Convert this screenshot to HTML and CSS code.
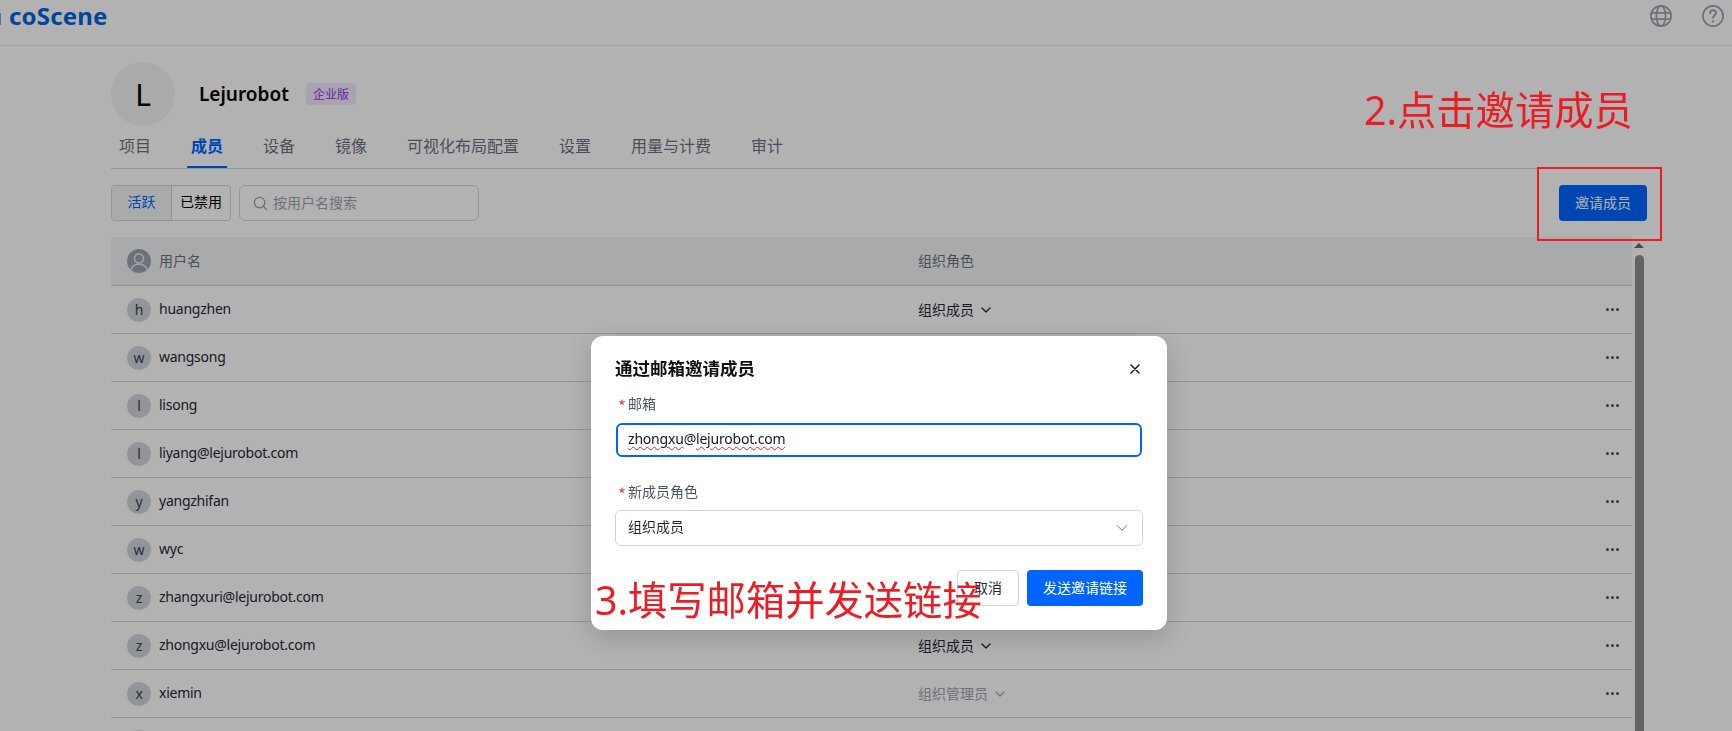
FILE: index.html
```html
<!DOCTYPE html>
<html lang="zh-CN">
<head>
<meta charset="utf-8">
<title>coScene 成员</title>
<link rel="stylesheet" href="styles.css">
</head>
<body>
<div class="page">
  <header class="topbar">
    <div class="logo"><span class="logo-mark"></span><span class="logo-text">coScene</span></div>
    <div class="top-icons">
      <svg class="top-icon" viewBox="1 1 22 22" fill="none" stroke="currentColor" stroke-width="1.7"><circle cx="12" cy="12" r="10.100"/><ellipse cx="12" cy="12" rx="4.600" ry="10.100"/><path d="M2.600 8.800h18.800M2.600 15.200h18.800"/></svg>
      <svg class="top-icon" viewBox="1 1 22 22" fill="none" stroke="currentColor" stroke-width="1.7" stroke-linecap="round"><circle cx="12" cy="12" r="10.100"/><path d="M9 9.200c0-1.700 1.300-2.900 3-2.900s3 1.200 3 2.800c0 2.500-3 2.500-3 4.600" stroke-width="1.900"/><path d="M12 17.300v.2" stroke-width="2.200"/></svg>
    </div>
  </header>
  <main class="content">
    <section class="org">
      <div class="org-avatar latin">L</div>
      <h1 class="org-name latin">Lejurobot</h1>
      <span class="badge">企业版</span>
    </section>
    <nav class="tabs">
      <a class="tab">项目</a>
      <a class="tab tab-active">成员</a>
      <a class="tab">设备</a>
      <a class="tab">镜像</a>
      <a class="tab">可视化布局配置</a>
      <a class="tab">设置</a>
      <a class="tab">用量与计费</a>
      <a class="tab">审计</a>
    </nav>
    <div class="toolbar">
      <div class="segment">
        <span class="seg seg-active">活跃</span>
        <span class="seg">已禁用</span>
      </div>
      <div class="search">
        <svg class="search-icon" viewBox="0 0 16 16" fill="none" stroke="currentColor" stroke-width="1.4" stroke-linecap="round"><circle cx="7" cy="7" r="5.600"/><path d="M11.200 11.200l3.600 3.600"/></svg>
        <span class="lift">按用户名搜索</span>
      </div>
      <button class="invite">邀请成员</button>
    </div>
    <div class="table-wrap">
      <div class="table">
        <div class="row row-head">
          <div class="cell-user">
            <svg class="user-icon" viewBox="0 0 24 24"><circle cx="12" cy="12" r="12" fill="#9ca3af"/><circle cx="12" cy="9.400" r="4.500" fill="none" stroke="#e5e7eb" stroke-width="1.600"/><path d="M3.800 20.600c1.400-3.600 4.600-5.400 8.200-5.400s6.800 1.800 8.200 5.400" fill="none" stroke="#e5e7eb" stroke-width="1.600"/></svg>
            <span class="lift">用户名</span>
          </div>
          <div class="cell-role"><span class="lift">组织角色</span></div>
        </div>
        <div class="row"><div class="cell-user"><span class="ava latin">h</span><span class="latin lift">huangzhen</span></div><div class="cell-role"><span class="lift">组织成员</span><svg class="chev" viewBox="0 0 12 12" fill="none" stroke="currentColor" stroke-width="1.300" stroke-linecap="round" stroke-linejoin="round"><path d="M2 4l4 4 4-4"/></svg></div><div class="more"><i></i><i></i><i></i></div></div>
        <div class="row"><div class="cell-user"><span class="ava latin">w</span><span class="latin lift">wangsong</span></div><div class="cell-role"><span class="lift">组织成员</span><svg class="chev" viewBox="0 0 12 12" fill="none" stroke="currentColor" stroke-width="1.300" stroke-linecap="round" stroke-linejoin="round"><path d="M2 4l4 4 4-4"/></svg></div><div class="more"><i></i><i></i><i></i></div></div>
        <div class="row"><div class="cell-user"><span class="ava latin">l</span><span class="latin lift">lisong</span></div><div class="cell-role"><span class="lift">组织成员</span><svg class="chev" viewBox="0 0 12 12" fill="none" stroke="currentColor" stroke-width="1.300" stroke-linecap="round" stroke-linejoin="round"><path d="M2 4l4 4 4-4"/></svg></div><div class="more"><i></i><i></i><i></i></div></div>
        <div class="row"><div class="cell-user"><span class="ava latin">l</span><span class="latin lift">liyang@lejurobot.com</span></div><div class="cell-role"><span class="lift">组织成员</span><svg class="chev" viewBox="0 0 12 12" fill="none" stroke="currentColor" stroke-width="1.300" stroke-linecap="round" stroke-linejoin="round"><path d="M2 4l4 4 4-4"/></svg></div><div class="more"><i></i><i></i><i></i></div></div>
        <div class="row"><div class="cell-user"><span class="ava latin">y</span><span class="latin lift">yangzhifan</span></div><div class="cell-role"><span class="lift">组织成员</span><svg class="chev" viewBox="0 0 12 12" fill="none" stroke="currentColor" stroke-width="1.300" stroke-linecap="round" stroke-linejoin="round"><path d="M2 4l4 4 4-4"/></svg></div><div class="more"><i></i><i></i><i></i></div></div>
        <div class="row"><div class="cell-user"><span class="ava latin">w</span><span class="latin lift">wyc</span></div><div class="cell-role"><span class="lift">组织成员</span><svg class="chev" viewBox="0 0 12 12" fill="none" stroke="currentColor" stroke-width="1.300" stroke-linecap="round" stroke-linejoin="round"><path d="M2 4l4 4 4-4"/></svg></div><div class="more"><i></i><i></i><i></i></div></div>
        <div class="row"><div class="cell-user"><span class="ava latin">z</span><span class="latin lift">zhangxuri@lejurobot.com</span></div><div class="cell-role"><span class="lift">组织成员</span><svg class="chev" viewBox="0 0 12 12" fill="none" stroke="currentColor" stroke-width="1.300" stroke-linecap="round" stroke-linejoin="round"><path d="M2 4l4 4 4-4"/></svg></div><div class="more"><i></i><i></i><i></i></div></div>
        <div class="row"><div class="cell-user"><span class="ava latin">z</span><span class="latin lift">zhongxu@lejurobot.com</span></div><div class="cell-role"><span class="lift">组织成员</span><svg class="chev" viewBox="0 0 12 12" fill="none" stroke="currentColor" stroke-width="1.300" stroke-linecap="round" stroke-linejoin="round"><path d="M2 4l4 4 4-4"/></svg></div><div class="more"><i></i><i></i><i></i></div></div>
        <div class="row"><div class="cell-user"><span class="ava latin">x</span><span class="latin lift">xiemin</span></div><div class="cell-role role-muted"><span class="lift">组织管理员</span><svg class="chev" viewBox="0 0 12 12" fill="none" stroke="currentColor" stroke-width="1.300" stroke-linecap="round" stroke-linejoin="round"><path d="M2 4l4 4 4-4"/></svg></div><div class="more"><i></i><i></i><i></i></div></div>
        <div class="row"><div class="cell-user"><span class="ava"></span></div></div>
      </div>
      <div class="scrollbar"><span class="scroll-up"></span><span class="scroll-thumb"></span></div>
    </div>
  </main>
</div>

<div class="overlay"></div>

<div class="modal">
  <div class="modal-head">
    <h2 class="modal-title">通过邮箱邀请成员</h2>
    <svg class="modal-close" viewBox="0 0 12 12" fill="none" stroke="currentColor" stroke-width="1.400" stroke-linecap="round"><path d="M2 2l8 8M10 2l-8 8"/></svg>
  </div>
  <label class="field-label"><span class="req">*</span>邮箱</label>
  <div class="input latin"><span class="typo">zhongxu</span>@<span class="typo">lejurobot.com</span></div>
  <label class="field-label field-gap"><span class="req">*</span>新成员角色</label>
  <div class="select">
    <span class="lift-more">组织成员</span>
    <svg class="select-chev" viewBox="0 0 12 12" fill="none" stroke="currentColor" stroke-width="1" stroke-linecap="round" stroke-linejoin="round"><path d="M1.500 3.800L6 8.300l4.500-4.500"/></svg>
  </div>
  <div class="modal-actions">
    <button class="btn-cancel">取消</button>
    <button class="btn-send">发送邀请链接</button>
  </div>
</div>

<div class="note note-two">2.点击邀请成员</div>
<div class="red-box"></div>
<div class="note note-three">3.填写邮箱并发送链接</div>
</body>
</html>
```
FILE: styles.css
```css
* { box-sizing: border-box; }
html, body { margin: 0; height: 100%; overflow: hidden; background: #fff; }
body {
  font-family: "Noto Sans CJK SC", sans-serif;
  font-size: 14px;
  color: #1f2937;
}
.latin { font-family: "Noto Sans", "Noto Sans CJK SC", sans-serif; letter-spacing: -0.25px; }
.lift { padding-bottom: 2px; }
.lift-more { padding-bottom: 4px; }
.page { height: 731px; overflow: hidden; display: flex; flex-direction: column; }
.topbar {
  height: 46px;
  flex: none;
  border-bottom: 1px solid #e5e7eb;
  display: flex;
  justify-content: space-between;
  align-items: flex-start;
}
.logo { display: flex; align-items: center; height: 32px; }
.logo-mark { width: 1px; height: 12px; background: #7aa6e6; margin-right: 8px; margin-top: 6px; }
.logo-text {
  font-family: "Noto Sans", sans-serif;
  font-size: 24px;
  font-weight: 700;
  color: #0065dd;
  line-height: 32px;
  letter-spacing: 0.2px;
}
.top-icons { display: flex; gap: 30px; padding: 5px 8px 0 0; }
.top-icon { width: 22px; height: 22px; color: #9ca3af; display: block; }
.content { padding: 16px 85px 0 111px; flex: 1; min-height: 0; display: flex; flex-direction: column; }
.org { display: flex; align-items: center; height: 64px; flex: none; }
.org-avatar {
  width: 64px; height: 64px; border-radius: 50%;
  background: #f3f4f6;
  color: #000;
  font-size: 30px;
  display: flex; align-items: center; justify-content: center;
}
.org-name { margin: 0 17px 0 24px; font-size: 19px; font-weight: 600; color: #000; line-height: 24px; letter-spacing: 0; }
.badge {
  width: 50px; height: 22px; border-radius: 4px;
  background: #f3e8ff; color: #9333ea;
  font-size: 12px; line-height: 22px; text-align: center;
}
.tabs {
  display: flex; gap: 32px; height: 43px; flex: none;
  padding-left: 4px;
  border-bottom: 1px solid #d1d5db;
}
.tab {
  padding: 0 4px; font-size: 16px; line-height: 38px; height: 42px;
  color: #6b7280;
}
.tab-active { color: #0065ff; font-weight: 700; border-bottom: 2px solid #0065ff; }
.toolbar { display: flex; align-items: stretch; height: 36px; margin-top: 16px; flex: none; }
.segment { display: flex; border: 1px solid #d1d5db; border-radius: 4px; width: 120px; overflow: hidden; }
.seg { flex: 1; text-align: center; line-height: 31px; color: #000; }
.seg-active { flex: none; width: 60px; background: #f3f4f6; color: #0065ff; border-right: 1px solid #d1d5db; }
.search {
  width: 240px; margin-left: 8px; border: 1px solid #d1d5db; border-radius: 6px;
  display: flex; align-items: center; gap: 5px; padding-left: 13px; color: #9ca3af;
}
.search-icon { width: 15px; height: 15px; color: #9ca3af; }
.invite {
  margin-left: auto; width: 88px; border: 0; border-radius: 4px; padding: 0 0 2px;
  background: #0065ff; color: #fff; font: inherit;
}
.table-wrap { display: flex; margin-top: 16px; flex: 1; min-height: 0; overflow: hidden; }
.table { width: 1521px; flex: none; }
.row {
  height: 48px; display: flex; align-items: center;
  border-bottom: 1px solid #d1d5db; padding-left: 16px; color: #1f2937;
}
.row-head { height: 49px; background: #f3f4f6; color: #6b7280; }
.cell-user { width: 791px; display: flex; align-items: center; gap: 8px; flex: none; }
.cell-role { display: flex; align-items: center; gap: 6px; flex: 1; }
.role-muted { color: #9ca3af; }
.user-icon { width: 24px; height: 24px; }
.ava {
  width: 24px; height: 24px; border-radius: 50%; background: #d1d5db; color: #374151;
  display: flex; align-items: center; justify-content: center; font-size: 14px; line-height: 1;
}
.chev { width: 12px; height: 12px; }
.more { display: flex; gap: 2px; padding-right: 13px; }
.more i { width: 3px; height: 3px; border-radius: 50%; background: #4b5563; }
.scrollbar { width: 14px; display: flex; flex-direction: column; align-items: center; flex: none; padding-top: 6px; }
.scroll-up { width: 0; height: 0; border-left: 5px solid transparent; border-right: 5px solid transparent; border-bottom: 5px solid #6b6b6b; }
.scroll-thumb { width: 9px; flex: 1; margin-top: 7px; background: #8f8f8f; border-radius: 5px 5px 0 0; }
.overlay { position: fixed; inset: 0; background: rgba(0, 0, 0, 0.3); }
.modal {
  position: absolute; left: 591px; top: 336px; width: 576px; height: 294px;
  background: #fff; border-radius: 12px; padding: 20px 24px 24px;
  box-shadow: 0 8px 24px rgba(0, 0, 0, 0.16);
  display: flex; flex-direction: column;
}
.modal-head { display: flex; justify-content: space-between; align-items: center; height: 26px; }
.modal-title { margin: 0; font-size: 17.500px; font-weight: 700; color: #111; line-height: 24px; padding-bottom: 2px; }
.modal-close { width: 12px; height: 12px; color: #111; margin-right: 2px; }
.field-label { display: block; margin-top: 12px; height: 20px; line-height: 18px; color: #4b5563; padding-left: 3px; }
.field-gap { margin-top: 24px; }
.req { color: #ef4444; margin-right: 2px; font-size: 17px; line-height: 1; vertical-align: -4px; }
.input {
  margin: 9px 1px 1px; height: 34px; border: 2px solid #0065ff; border-radius: 6px;
  padding-left: 10px; line-height: 28px; color: #111827; letter-spacing: -0.2px;
}
.typo { text-decoration: underline wavy #f02030 1px; text-underline-offset: 2px; }
.select {
  margin-top: 8px; height: 36px; border: 1px solid #d1d5db; border-radius: 6px;
  display: flex; align-items: center; justify-content: space-between; padding: 0 14px 0 12px; color: #1f2937;
}
.select-chev { width: 12px; height: 12px; color: #6b7280; }
.modal-actions { display: flex; justify-content: flex-end; gap: 8px; margin-top: 24px; }
.btn-cancel, .btn-send { height: 36px; border-radius: 4px; font: inherit; padding: 0 0 3px; }
.btn-cancel { width: 62px; background: #fff; border: 1px solid #d1d5db; color: #1f2937; }
.btn-send { width: 116px; background: #0065ff; border: 0; color: #fff; }
.note { position: absolute; color: #ed1c24; font-family: "Noto Sans", "Noto Sans CJK SC", sans-serif; white-space: nowrap; line-height: 1; }
.note-two { left: 1364px; top: 91px; font-size: 39.300px; }
.note-three { left: 595px; top: 581px; font-size: 39.300px; }
.red-box { position: absolute; left: 1537px; top: 167px; width: 125px; height: 74px; border: 2px solid #ed1c24; }
```
